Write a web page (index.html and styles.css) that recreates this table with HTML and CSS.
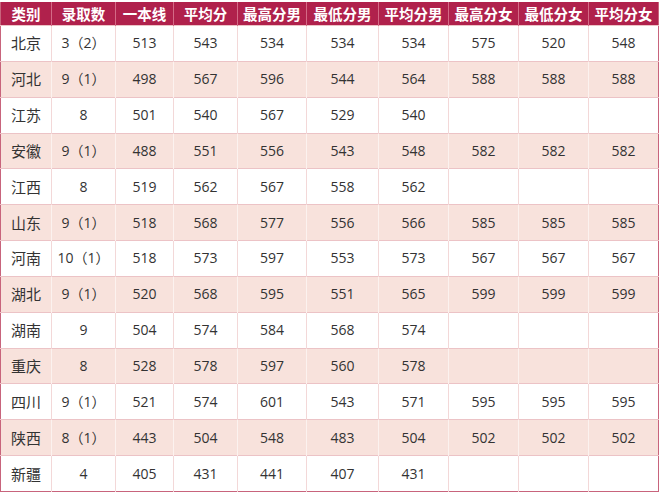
FILE: index.html
```html
<!DOCTYPE html>
<html lang="zh">
<head>
<meta charset="utf-8">
<link rel="stylesheet" href="styles.css">
</head>
<body>
<div class="wrap">
<table class="score">
  <colgroup>
    <col class="c1"><col class="c2"><col class="c3"><col class="c4"><col class="c5">
    <col class="c6"><col class="c7"><col class="c8"><col class="c9"><col class="c10">
  </colgroup>
  <thead>
    <tr><th>类别</th><th>录取数</th><th>一本线</th><th>平均分</th><th>最高分男</th><th>最低分男</th><th>平均分男</th><th>最高分女</th><th>最低分女</th><th>平均分女</th></tr>
  </thead>
  <tbody>
    <tr><td>北京</td><td>3（2）</td><td>513</td><td>543</td><td>534</td><td>534</td><td>534</td><td>575</td><td>520</td><td>548</td></tr>
    <tr><td>河北</td><td>9（1）</td><td>498</td><td>567</td><td>596</td><td>544</td><td>564</td><td>588</td><td>588</td><td>588</td></tr>
    <tr><td>江苏</td><td>8</td><td>501</td><td>540</td><td>567</td><td>529</td><td>540</td><td></td><td></td><td></td></tr>
    <tr><td>安徽</td><td>9（1）</td><td>488</td><td>551</td><td>556</td><td>543</td><td>548</td><td>582</td><td>582</td><td>582</td></tr>
    <tr><td>江西</td><td>8</td><td>519</td><td>562</td><td>567</td><td>558</td><td>562</td><td></td><td></td><td></td></tr>
    <tr><td>山东</td><td>9（1）</td><td>518</td><td>568</td><td>577</td><td>556</td><td>566</td><td>585</td><td>585</td><td>585</td></tr>
    <tr><td>河南</td><td>10（1）</td><td>518</td><td>573</td><td>597</td><td>553</td><td>573</td><td>567</td><td>567</td><td>567</td></tr>
    <tr><td>湖北</td><td>9（1）</td><td>520</td><td>568</td><td>595</td><td>551</td><td>565</td><td>599</td><td>599</td><td>599</td></tr>
    <tr><td>湖南</td><td>9</td><td>504</td><td>574</td><td>584</td><td>568</td><td>574</td><td></td><td></td><td></td></tr>
    <tr><td>重庆</td><td>8</td><td>528</td><td>578</td><td>597</td><td>560</td><td>578</td><td></td><td></td><td></td></tr>
    <tr><td>四川</td><td>9（1）</td><td>521</td><td>574</td><td>601</td><td>543</td><td>571</td><td>595</td><td>595</td><td>595</td></tr>
    <tr><td>陕西</td><td>8（1）</td><td>443</td><td>504</td><td>548</td><td>483</td><td>504</td><td>502</td><td>502</td><td>502</td></tr>
    <tr><td>新疆</td><td>4</td><td>405</td><td>431</td><td>441</td><td>407</td><td>431</td><td></td><td></td><td></td></tr>
  </tbody>
</table>
</div>
</body>
</html>
```

FILE: styles.css
```css
html, body {
  margin: 0;
  padding: 0;
  background: #ffffff;
}

.wrap {
  padding-top: 2px;
}

.score {
  width: 659px;
  table-layout: fixed;
  border-collapse: collapse;
  font-family: "Open Sans", "Noto Sans CJK SC", sans-serif;
  color: #333333;
  border-left: 1px solid #c8647c;
  border-right: 1px solid #c8647c;
  border-bottom: 1px solid #c8647c;
}

.c1 { width: 51px; }
.c2 { width: 64px; }
.c3 { width: 58px; }
.c4 { width: 64px; }
.c5 { width: 69px; }
.c6 { width: 72px; }
.c7 { width: 70px; }
.c8 { width: 70px; }
.c9 { width: 70px; }
.c10 { width: 70px; }

.score th {
  background: #b0214c;
  color: #ffffff;
  font-family: "Noto Sans CJK SC", sans-serif;
  font-weight: 700;
  font-size: 14.5px;
  height: 23px;
  padding: 0;
  line-height: 20px;
  text-align: center;
  border-left: 1px solid #d46a86;
  white-space: nowrap;
}

.score th:first-child {
  border-left: none;
}

.score td {
  height: 34.85px;
  padding: 0;
  line-height: 20px;
  text-align: center;
  font-size: 14px;
  border-top: 1px solid #ecc3c6;
  border-left: 1px solid #f3d8d8;
  white-space: nowrap;
}

.score td:first-child {
  border-left: none;
  font-size: 15px;
}

.score tbody tr:nth-child(even) td {
  background: #f8e2dc;
  border-left-color: #fcf2ef;
}

.score tbody tr:nth-child(even) td:first-child {
  border-left: none;
}
```
